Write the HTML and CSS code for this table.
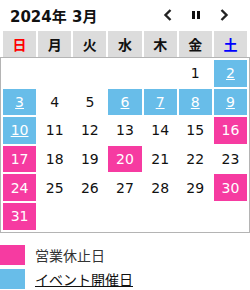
FILE: index.html
```html
<!DOCTYPE html>
<html lang="ja">
<head>
<meta charset="utf-8">
<link rel="stylesheet" href="styles.css">
</head>
<body>
<div class="cal">
  <div class="cal-head">
    <div class="cal-title">2024年 3月</div>
    <div class="cal-nav">
      <svg class="nav-icon" width="14" height="16" viewBox="0 0 14 16"><path d="M9.5 3 L4.5 8 L9.5 13" fill="none" stroke="#222" stroke-width="2.4"/></svg>
      <svg class="nav-icon" width="14" height="16" viewBox="0 0 14 16"><rect x="3" y="4" width="3" height="8" fill="#111"/><rect x="8" y="4" width="3" height="8" fill="#111"/></svg>
      <svg class="nav-icon" width="14" height="16" viewBox="0 0 14 16"><path d="M4.5 3 L9.5 8 L4.5 13" fill="none" stroke="#222" stroke-width="2.4"/></svg>
    </div>
  </div>
  <table class="week">
    <tr>
      <th class="sun">日</th><th>月</th><th>火</th><th>水</th><th>木</th><th>金</th><th class="sat">土</th>
    </tr>
  </table>
  <table class="days">
    <tr><td></td><td></td><td></td><td></td><td></td><td>1</td><td class="ev"><a>2</a></td></tr>
    <tr><td class="ev"><a>3</a></td><td>4</td><td>5</td><td class="ev"><a>6</a></td><td class="ev"><a>7</a></td><td class="ev"><a>8</a></td><td class="ev"><a>9</a></td></tr>
    <tr><td class="ev"><a>10</a></td><td>11</td><td>12</td><td>13</td><td>14</td><td>15</td><td class="off">16</td></tr>
    <tr><td class="off">17</td><td>18</td><td>19</td><td class="off">20</td><td>21</td><td>22</td><td>23</td></tr>
    <tr><td class="off">24</td><td>25</td><td>26</td><td>27</td><td>28</td><td>29</td><td class="off">30</td></tr>
    <tr><td class="off">31</td><td></td><td></td><td></td><td></td><td></td><td></td></tr>
  </table>
</div>
<ul class="legend">
  <li><span class="sw sw-off"></span><span class="lg-text">営業休止日</span></li>
  <li><span class="sw sw-ev"></span><a class="lg-text lg-link">イベント開催日</a></li>
</ul>
</body>
</html>
```
FILE: styles.css
```css
html, body {
  margin: 0;
  padding: 0;
  background: #fff;
}
body {
  width: 250px;
  font-family: "DejaVu Sans", "Noto Sans CJK JP", sans-serif;
  color: #111;
}
.cal-head {
  display: flex;
  align-items: center;
  justify-content: space-between;
  height: 31px;
  padding: 0 19px 0 10px;
  box-sizing: border-box;
}
.cal-title {
  font-size: 15px;
  font-weight: bold;
  padding-bottom: 1px;
}
.cal-nav {
  display: flex;
  gap: 14px;
  align-items: center;
  padding-bottom: 2px;
}
.nav-icon {
  display: block;
}
.week, .days {
  width: 250px;
  border-collapse: separate;
  border-spacing: 2px;
  table-layout: fixed;
}
.week {
  padding: 0 1px;
  border-spacing: 2px 0;
}
.week th {
  background: #dcdcdc;
  height: 26px;
  padding: 0;
  font-size: 14px;
  font-weight: bold;
  color: #111;
  text-align: center;
}
.week th.sun { color: #f00; }
.week th.sat { color: #00f; }
.days {
  border: 1px solid #b4b4b4;
}
.days td {
  height: 26.6px;
  padding: 0;
  text-align: center;
  font-size: 14px;
  color: #111;
}
.days td.ev {
  background: #68bde9;
}
.days td.ev a {
  color: #fff;
  text-decoration: underline;
}
.days td.off {
  background: #f63ba1;
  color: #fff;
}
.legend {
  list-style: none;
  margin: 12px 0 0;
  padding: 0;
  display: flex;
  flex-direction: column;
  gap: 4px;
}
.legend li {
  display: flex;
  align-items: center;
  gap: 10px;
  height: 20px;
}
.sw {
  width: 25px;
  height: 20px;
  display: block;
}
.sw-off { background: #f63ba1; }
.sw-ev { background: #68bde9; }
.lg-text {
  font-family: "Noto Sans CJK JP", sans-serif;
  font-size: 14px;
  color: #333;
}
.lg-link {
  color: #111;
  text-decoration: underline;
}
```
